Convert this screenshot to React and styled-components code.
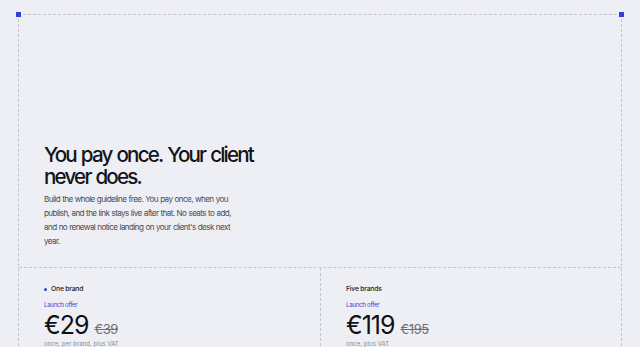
import { styled, createGlobalStyle } from "styled-components";

const GlobalStyle = createGlobalStyle`
  html, body {
    margin: 0;
    padding: 0;
    background: #eeeff4;
  }
  body {
    font-family: Inter, "Noto Sans", sans-serif;
    color: #16161a;
    -webkit-font-smoothing: antialiased;
  }
`;

const plans = [
  { name: "One brand", dot: true, price: "€29", was: "€39", note: "once, per brand, plus VAT" },
  { name: "Five brands", dot: false, price: "€119", was: "€195", note: "once, plus VAT" },
];

export default function App() {
  return (
    <>
      <GlobalStyle />
      <Page>
        <Frame>
          <Corner $side="left" />
          <Corner $side="right" />
          <Hero>
            <Heading>
              You pay once. Your client
              <br />
              never does.
            </Heading>
            <Lead>
              Build the whole guideline free. You pay once, when you publish, and the link stays
              live after that. No seats to add, and no renewal notice landing on your client's desk
              next year.
            </Lead>
          </Hero>
          <Plans>
            {plans.map((plan) => (
              <Plan key={plan.name}>
                <PlanName>
                  {plan.dot && <Dot />}
                  {plan.name}
                </PlanName>
                <Offer>Launch offer</Offer>
                <PriceRow>
                  <Price>{plan.price}</Price>
                  <WasPrice>{plan.was}</WasPrice>
                </PriceRow>
                <Note>{plan.note}</Note>
              </Plan>
            ))}
          </Plans>
        </Frame>
      </Page>
    </>
  );
}

const Page = styled.div`
  min-height: 347px;
  padding: 14px 18px 0 18px;
  box-sizing: border-box;
`;

const Frame = styled.div`
  position: relative;
  border: 1px dashed #c3c4cc;
  border-bottom: none;
`;

const Corner = styled.span`
  position: absolute;
  top: -3px;
  ${(p) => (p.$side === "left" ? "left: -3px;" : "right: -3px;")}
  width: 5px;
  height: 5px;
  background: #2e3fd8;
`;

const Hero = styled.section`
  height: 253px;
  box-sizing: border-box;
  padding: 0 25px 19px 25px;
  display: flex;
  flex-direction: column;
  justify-content: flex-end;
  border-bottom: 1px dashed #c3c4cc;
`;

const Heading = styled.h1`
  margin: 0 0 4px 0;
  font-size: 20.6px;
  line-height: 22px;
  font-weight: 500;
  letter-spacing: -0.088em;
  word-spacing: 0.06em;
  color: #141418;
`;

const Lead = styled.p`
  margin: 0;
  width: 190px;
  font-size: 8.1px;
  line-height: 14px;
  letter-spacing: -0.072em;
  word-spacing: 0.05em;
  color: #4a4b52;
`;

const Plans = styled.div`
  display: grid;
  grid-template-columns: 302px 1fr;
`;

const Plan = styled.div`
  padding: 15px 25px 0 25px;
  height: 78px;
  overflow: hidden;
  &:first-child {
    border-right: 1px dashed #c3c4cc;
  }
`;

const PlanName = styled.div`
  display: flex;
  align-items: center;
  gap: 4px;
  font-size: 6.8px;
  line-height: 12px;
  font-weight: 500;
  letter-spacing: -0.03em;
  color: #1a1a20;
`;

const Dot = styled.span`
  flex: none;
  width: 3px;
  height: 3px;
  border-radius: 50%;
  background: #2e3fd8;
`;

const Offer = styled.div`
  margin-top: 5px;
  font-size: 6.2px;
  line-height: 10px;
  letter-spacing: -0.05em;
  color: #3b44d4;
`;

const PriceRow = styled.div`
  display: flex;
  align-items: baseline;
  gap: 6px;
  margin-top: 2px;
`;

const Price = styled.span`
  font-size: 25px;
  line-height: 26px;
  font-weight: 400;
  letter-spacing: -0.04em;
  color: #111114;
`;

const WasPrice = styled.span`
  font-size: 13px;
  color: #6d6e76;
  letter-spacing: -0.03em;
  text-decoration: line-through;
  text-decoration-thickness: 1px;
`;

const Note = styled.div`
  margin-top: 2px;
  font-size: 6px;
  line-height: 8px;
  letter-spacing: 0.01em;
  color: #8a8b92;
`;
